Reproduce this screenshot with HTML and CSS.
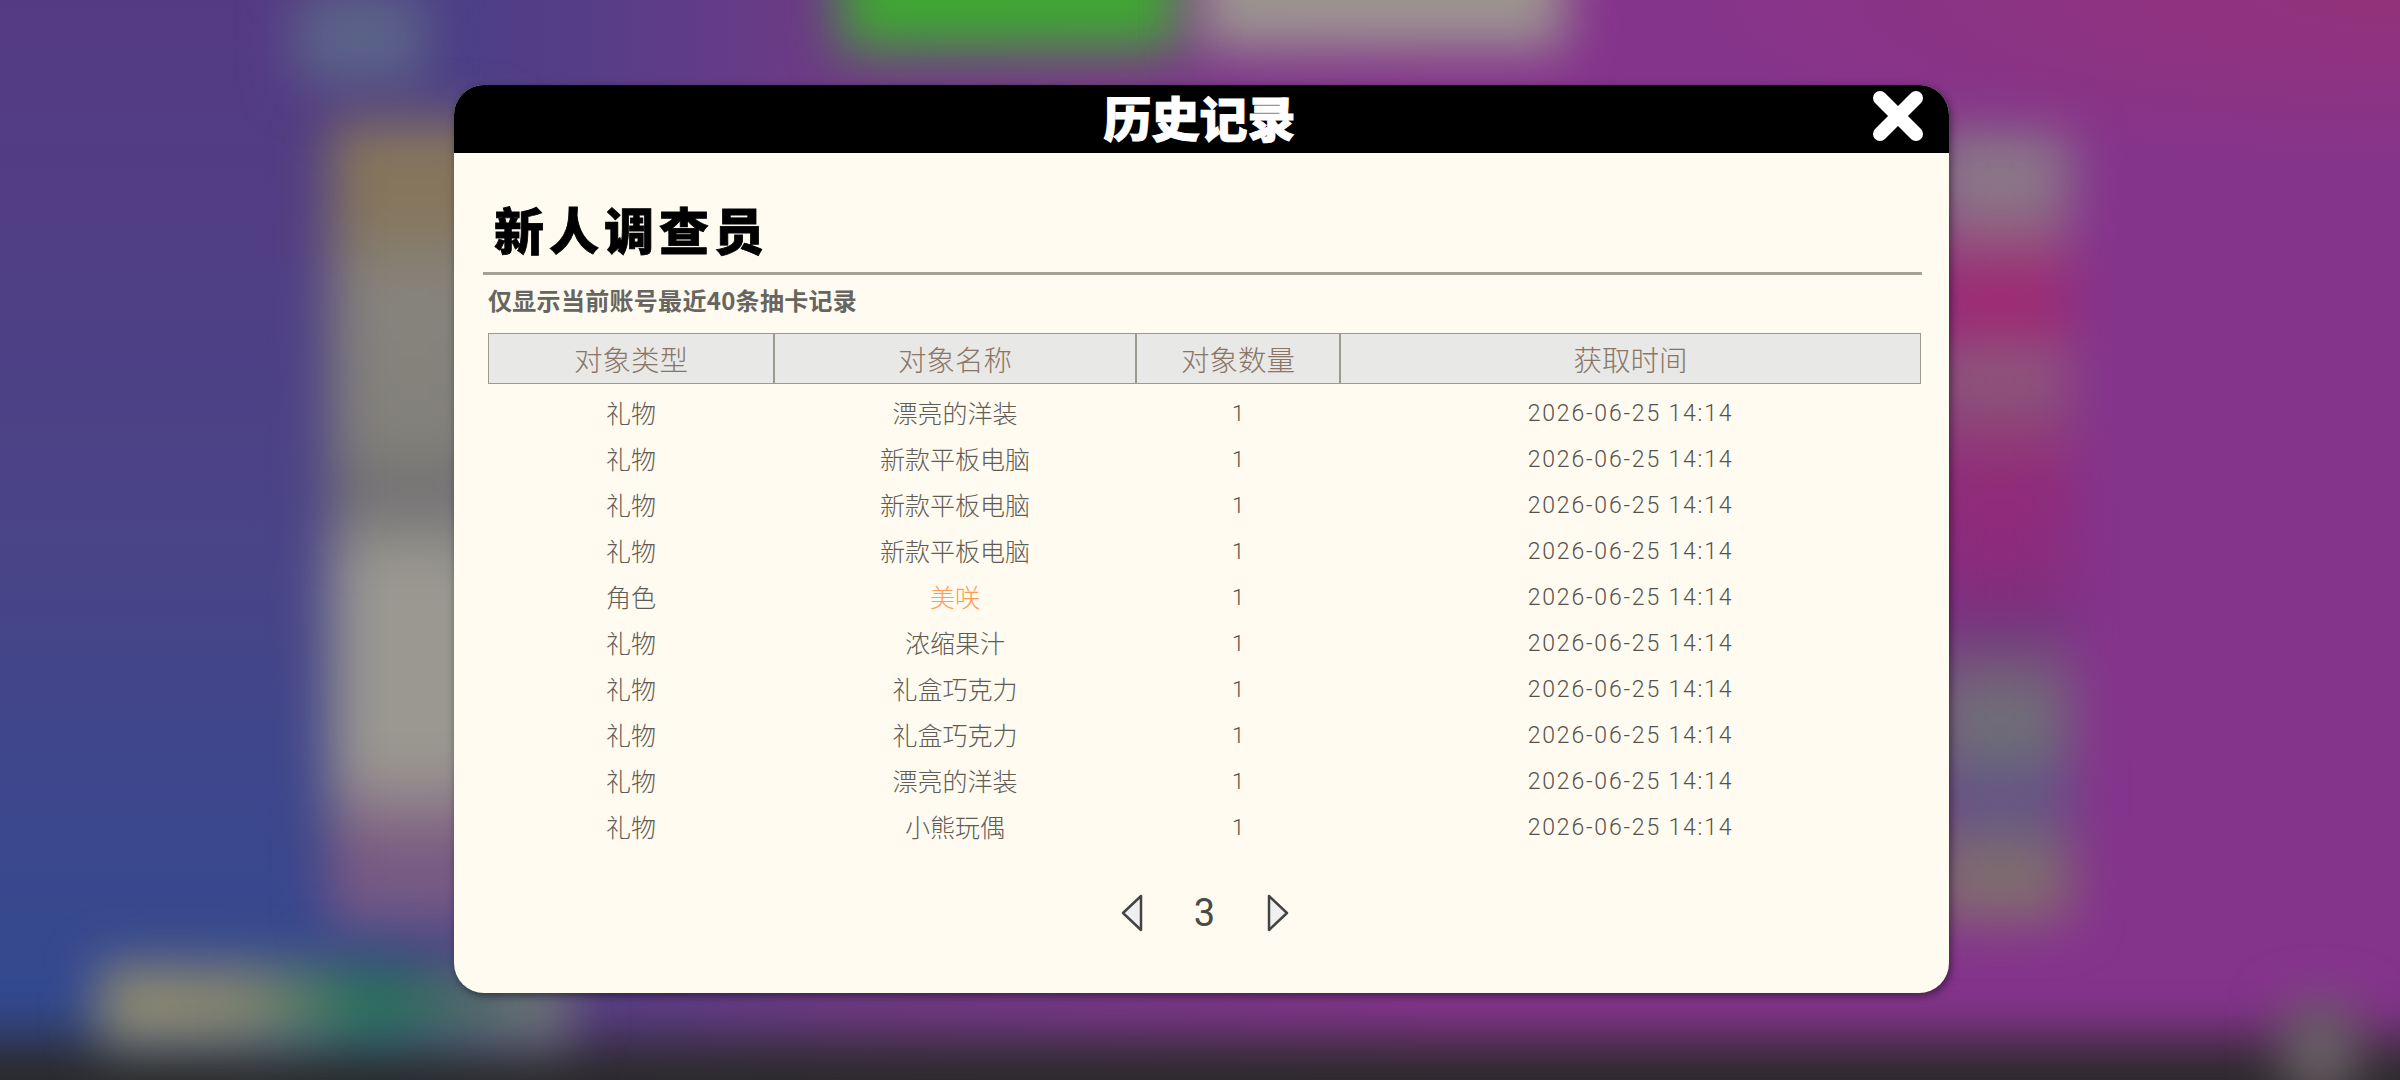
FILE: index.html
```html
<!DOCTYPE html>
<html lang="zh-CN">
<head>
    <meta charset="UTF-8">
    <title>历史记录</title>
    <link rel="stylesheet" href="styles.css">
</head>
<body>
    <!-- blurred game screen behind the dialog -->
    <div class="backdrop">
        <div class="blob top-green"></div>
        <div class="blob top-gray"></div>
        <div class="blob top-slate"></div>
        <div class="blob left-column"></div>
        <div class="blob right-column"></div>
        <div class="blob bottom-bar"></div>
        <div class="blob bottom-row"></div>
        <div class="blob bottom-right"></div>
    </div>

    <div class="dialog">
        <header class="dialog-header">
            <h1>历史记录</h1>
            <button class="close-button" aria-label="关闭">
                <svg width="50" height="50" viewBox="0 0 50 50">
                    <path d="M7 7 L43 43 M43 7 L7 43" stroke="#fff" stroke-width="14" stroke-linecap="round" fill="none"/>
                </svg>
            </button>
        </header>

        <div class="dialog-body">
            <h2 class="pool-name">新人调查员</h2>
            <p class="note">仅显示当前账号最近40条抽卡记录</p>

            <div class="table-head">
                <div class="col-type">对象类型</div>
                <div class="col-name">对象名称</div>
                <div class="col-count">对象数量</div>
                <div class="col-time">获取时间</div>
            </div>

            <div class="row"><div class="col-type">礼物</div><div class="col-name">漂亮的洋装</div><div class="col-count">1</div><div class="col-time">2026-06-25 14:14</div></div>
            <div class="row"><div class="col-type">礼物</div><div class="col-name">新款平板电脑</div><div class="col-count">1</div><div class="col-time">2026-06-25 14:14</div></div>
            <div class="row"><div class="col-type">礼物</div><div class="col-name">新款平板电脑</div><div class="col-count">1</div><div class="col-time">2026-06-25 14:14</div></div>
            <div class="row"><div class="col-type">礼物</div><div class="col-name">新款平板电脑</div><div class="col-count">1</div><div class="col-time">2026-06-25 14:14</div></div>
            <div class="row"><div class="col-type">角色</div><div class="col-name rare">美咲</div><div class="col-count">1</div><div class="col-time">2026-06-25 14:14</div></div>
            <div class="row"><div class="col-type">礼物</div><div class="col-name">浓缩果汁</div><div class="col-count">1</div><div class="col-time">2026-06-25 14:14</div></div>
            <div class="row"><div class="col-type">礼物</div><div class="col-name">礼盒巧克力</div><div class="col-count">1</div><div class="col-time">2026-06-25 14:14</div></div>
            <div class="row"><div class="col-type">礼物</div><div class="col-name">礼盒巧克力</div><div class="col-count">1</div><div class="col-time">2026-06-25 14:14</div></div>
            <div class="row"><div class="col-type">礼物</div><div class="col-name">漂亮的洋装</div><div class="col-count">1</div><div class="col-time">2026-06-25 14:14</div></div>
            <div class="row"><div class="col-type">礼物</div><div class="col-name">小熊玩偶</div><div class="col-count">1</div><div class="col-time">2026-06-25 14:14</div></div>

            <div class="pager">
                <svg class="arrow" width="22" height="38" viewBox="0 0 22 38">
                    <path d="M20 2 L2 19 L20 36 Z" fill="#f0f0f0" stroke="#444" stroke-width="2.5" stroke-linejoin="round"/>
                </svg>
                <span class="page-num">3</span>
                <svg class="arrow" width="22" height="38" viewBox="0 0 22 38">
                    <path d="M2 2 L20 19 L2 36 Z" fill="#f0f0f0" stroke="#444" stroke-width="2.5" stroke-linejoin="round"/>
                </svg>
            </div>
        </div>
    </div>
</body>
</html>
```

FILE: styles.css
```css
/* General Styles */
html, body {
    margin: 0;
    height: 100%;
}

body {
    width: 2400px;
    height: 1080px;
    overflow: hidden;
    position: relative;
    font-family: "Noto Sans CJK SC", "Noto Sans", sans-serif;
    background-color: #85348c;
}

/* Blurred background */
.backdrop {
    position: absolute;
    inset: 0;
    overflow: hidden;
    background: linear-gradient(90deg, #4a4088 0%, #4d3f88 20%, #6f3a85 35%, #85348c 60%, #85348c 100%);
}

.backdrop::before {
    content: "";
    position: absolute;
    left: 0;
    top: 0;
    width: 480px;
    height: 1080px;
    background: linear-gradient(180deg, #553a82 0%, #4a4488 50%, #33498f 92%);
    -webkit-mask-image: linear-gradient(90deg, black 60%, transparent 100%);
    mask-image: linear-gradient(90deg, black 60%, transparent 100%);
}

.backdrop::after {
    content: "";
    position: absolute;
    right: 0;
    top: 0;
    width: 700px;
    height: 160px;
    background: radial-gradient(ellipse at 100% 0%, #93327a 0%, rgba(133, 52, 140, 0) 75%);
}

.blob {
    position: absolute;
    filter: blur(26px);
}

.top-green { left: 840px; top: -60px; width: 340px; height: 110px; background-color: #3fa832; }
.top-gray { left: 1200px; top: -60px; width: 365px; height: 110px; background-color: #9c9590; }
.top-slate { left: 295px; top: -10px; width: 130px; height: 95px; background-color: #5b6488; }

.left-column {
    left: 330px;
    top: 120px;
    width: 170px;
    height: 810px;
    background: linear-gradient(180deg,
        #86765c 0%, #86765c 12%, #86847c 20%, #82807a 42%, #6c6a6e 45%,
        #9a9890 55%, #9a9890 80%, #7c5a80 90%, #6f5a88 100%);
}

.right-column {
    left: 1930px;
    top: 130px;
    width: 140px;
    height: 790px;
    background: linear-gradient(180deg,
        #8a7888 0%, #8a7888 9%, #9e2672 20%, #9e2672 24%, #8c5e80 30%,
        #8c5078 34%, #922a78 44%, #8a2c7c 56%, #75307f 62%, #727078 72%,
        #6a6a78 80%, #5e4c8c 84%, #7c6c70 92%, #85726a 100%);
}

.bottom-bar { left: -80px; top: 1040px; width: 2560px; height: 120px; background-color: #2a2a2a; }

.bottom-row {
    left: 100px;
    top: 965px;
    width: 470px;
    height: 80px;
    background: linear-gradient(90deg, #948e70 0%, #86866f 30%, #22705a 58%, #4a6a68 75%, #777 100%);
}

.bottom-right { left: 2285px; top: 1005px; width: 70px; height: 90px; background-color: #6c6468; }

/* Dialog */
.dialog {
    position: absolute;
    left: 454px;
    top: 85px;
    width: 1495px;
    height: 908px;
    border-radius: 30px;
    background-color: #fffbf0;
    box-shadow: 2px 3px 8px rgba(0, 0, 0, 0.45);
    display: flex;
    flex-direction: column;
}

.dialog-header {
    height: 68px;
    border-radius: 30px 30px 0 0;
    background-color: black;
    display: flex;
    justify-content: center;
    align-items: center;
    position: relative;
}

.dialog-header h1 {
    margin: 0 0 0 -4px;
    color: white;
    font-size: 48px;
    font-weight: 900;
    line-height: 60px;
    padding-bottom: 6px;
    -webkit-text-stroke: 1px white;
}

.close-button {
    position: absolute;
    right: 26px;
    top: 6px;
    width: 50px;
    height: 50px;
    padding: 0;
    border: none;
    background: none;
}

.dialog-body {
    flex: 1;
    padding: 0 28px 0 34px;
    display: flex;
    flex-direction: column;
}

.pool-name {
    margin: 45px 0 0 -5px;
    padding: 0 0 7px 11px;
    width: 1439px;
    box-sizing: border-box;
    height: 77px;
    border-bottom: 3px solid #a5a193;
    color: black;
    font-size: 50px;
    font-weight: 900;
    line-height: 60px;
    letter-spacing: 5px;
    -webkit-text-stroke: 0.8px black;
}

.note {
    margin: 10px 0 0;
    height: 30px;
    color: #66655f;
    font-size: 24px;
    font-weight: 700;
    line-height: 30px;
    letter-spacing: 0.3px;
}

.table-head {
    margin-top: 18px;
    height: 51px;
    display: flex;
    box-sizing: border-box;
    border: 1px solid #9d9a90;
    background-color: #e8e8e6;
    color: #8a7566;
    font-size: 28.5px;
    font-weight: 300;
    line-height: 49px;
    text-align: center;
}

.table-head .col-type,
.table-head .col-name,
.table-head .col-count {
    border-right: 2px solid #9d9a90;
    box-sizing: border-box;
}

.col-type { width: 286px; }
.col-name { width: 362px; }
.col-count { width: 204px; }
.col-time { flex: 1; }

.row {
    height: 46px;
    display: flex;
    align-items: center;
    text-align: center;
    color: #5f5c55;
    font-size: 25px;
    font-weight: 300;
    line-height: 44px;
}

.table-head + .row {
    margin-top: 5px;
}

.row .col-time {
    font-family: Roboto, sans-serif;
    font-size: 23px;
    letter-spacing: 1.8px;
    padding-top: 3px;
    box-sizing: border-box;
    color: #55524c;
}

.row .col-count {
    font-family: Roboto, sans-serif;
    font-size: 22px;
    padding-top: 3px;
    color: #55524c;
}

.rare {
    color: #ff9a55;
}

/* Pagination */
.pager {
    margin-top: 36px;
    display: flex;
    justify-content: center;
    align-items: center;
    gap: 25px;
}

.page-num {
    width: 74px;
    text-align: center;
    color: #4c4a46;
    font-family: Roboto, sans-serif;
    font-size: 38px;
    line-height: 56px;
    font-weight: 400;
}
```
